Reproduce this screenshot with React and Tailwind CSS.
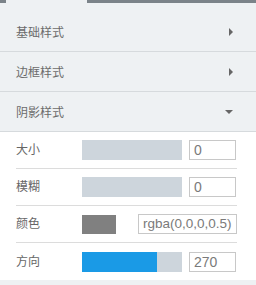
import React from 'react';

const Section = ({ title, open }) => (
  <div className="h-10 flex items-center justify-between pl-4 pr-[23px] border-b border-[#d6dadd] bg-[#eef1f3]">
    <span className="text-[12px] text-[#6b6b6b]">{title}</span>
    {open ? (
      <span className="w-0 h-0 border-l-[4px] border-r-[4px] border-t-[4px] border-l-transparent border-r-transparent border-t-[#666]" />
    ) : (
      <span className="w-0 h-0 border-t-[4px] border-b-[4px] border-l-[4px] border-t-transparent border-b-transparent border-l-[#666]" />
    )}
  </div>
);

const Row = ({ label, children, last }) => (
  <div className={`h-[37px] flex items-center ${last ? '' : 'border-b border-[#dcdcdc]'}`}>
    <span className="w-[66px] text-[12px] text-[#666]">{label}</span>
    {children}
  </div>
);

const Bar = ({ fill = 0 }) => (
  <div className="w-[100px] h-5 bg-[#cdd5dc]">
    <div className="h-full bg-[#1a9ae6]" style={{ width: `${fill}%` }} />
  </div>
);

const Input = ({ value, wide }) => (
  <div
    className={`h-5 border border-[#c8c8c8] bg-white leading-[18px] text-[#7a7a7a] pl-1 whitespace-nowrap overflow-hidden ${
      wide ? 'w-[99px] ml-auto text-[13.5px]' : 'w-[47px] ml-[7px] text-[14px]'
    }`}
  >
    {value}
  </div>
);

export default function App() {
  return (
    <div className="w-[256px] h-[285px] bg-[#eef1f3] overflow-hidden" style={{ fontFamily: '"Noto Sans CJK SC", "Liberation Sans", sans-serif' }}>
      <div className="flex h-[3px]">
        <div className="w-[6px] bg-[#7b8389]" />
        <div className="w-[81px]" />
        <div className="flex-1 bg-[#7b8389]" />
      </div>
      <div className="h-[9px]" />
      <Section title="基础样式" />
      <Section title="边框样式" />
      <Section title="阴影样式" open />
      <div className="bg-white pl-4 pr-[19px] h-[148px]" style={{ fontFamily: '"Liberation Sans", "Noto Sans CJK SC", sans-serif' }}>
        <Row label="大小">
          <Bar />
          <Input value="0" />
        </Row>
        <Row label="模糊">
          <Bar />
          <Input value="0" />
        </Row>
        <Row label="颜色">
          <div className="w-[34px] h-[19px] bg-[#808080]" />
          <Input value="rgba(0,0,0,0.5)" wide />
        </Row>
        <Row label="方向" last>
          <Bar fill={75} />
          <Input value="270" />
        </Row>
      </div>
    </div>
  );
}
